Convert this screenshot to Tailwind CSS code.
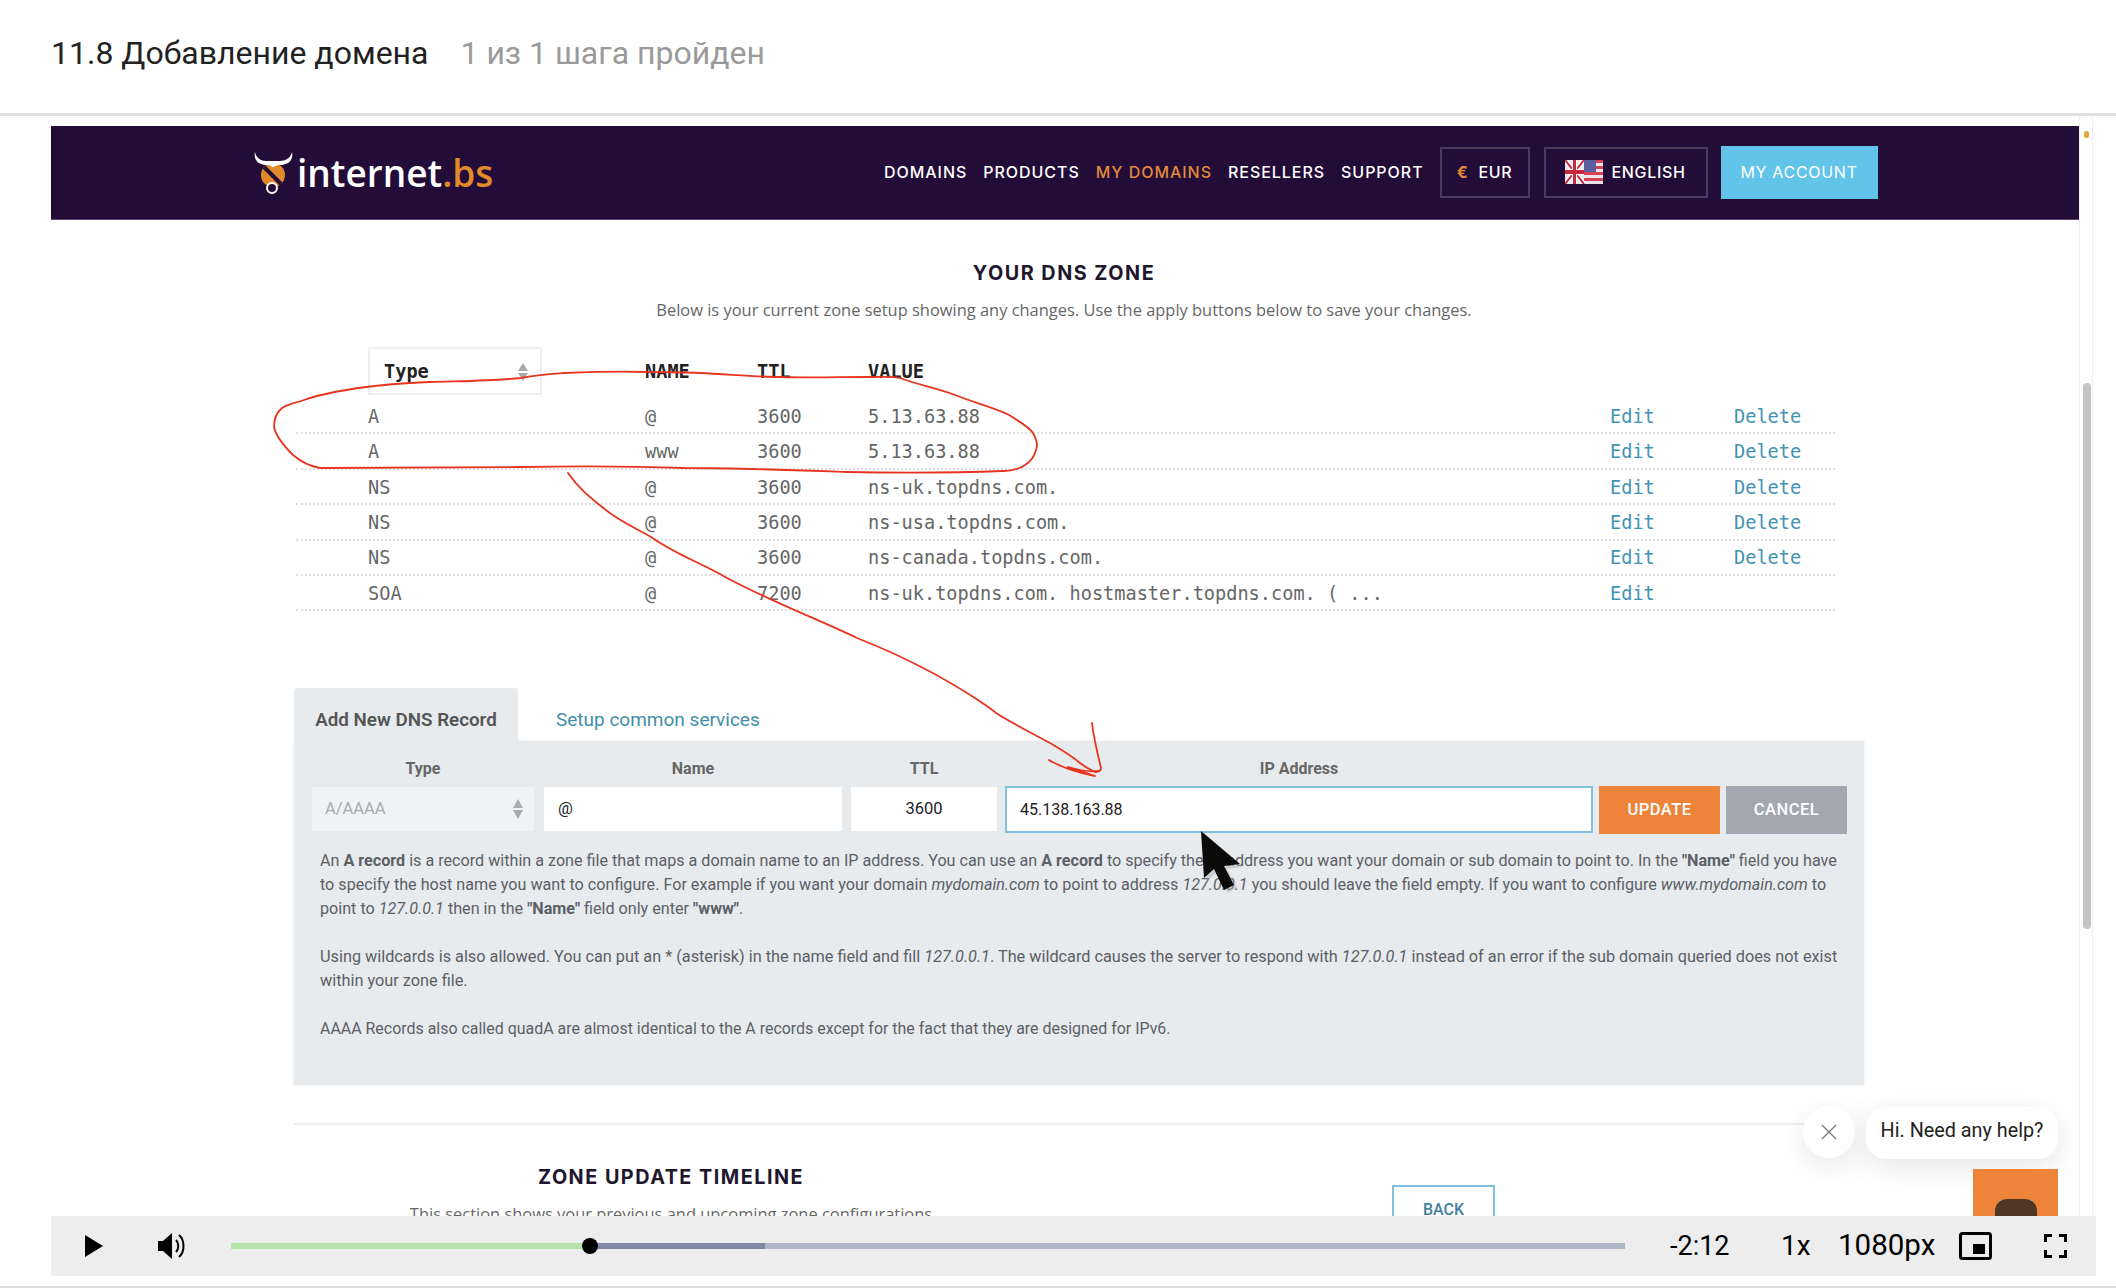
<!DOCTYPE html>
<html lang="ru">
<head>
  <meta charset="UTF-8" />
  <title>11.8 Добавление домена</title>
  <script src="https://cdn.jsdelivr.net/npm/@tailwindcss/browser@4"></script>
</head>
<body class="bg-white">
<div class="relative w-[2116px] h-[1288px] overflow-hidden bg-white font-['Roboto',sans-serif]">

  <!-- Lesson title -->
  <div class="h-[116px] border-b-[3px] border-[#e0e0e0] pl-[51px] pt-[33px] flex gap-[32px] text-[32px] leading-[40px]">
    <span class="text-[#222]">11.8 Добавление домена</span>
    <span class="text-[#9a9a9a]">1 из 1 шага пройден</span>
  </div>

  <div class="flex">
    <div class="w-[2079px] pt-[10px] pl-[51px] shrink-0">
      <!-- Site nav -->
      <div class="h-[94px] bg-[#230c37] border-b border-[#5b4a6b] flex items-center">
        <div class="ml-[202px] w-[242px] h-[46px] flex items-center">
          <svg width="44" height="44" viewBox="0 0 44 44" class="shrink-0">
            <circle cx="20" cy="24" r="12" fill="#e08a2c"/>
            <path d="M11 16 L28 33" stroke="#230c37" stroke-width="4"/>
            <path d="M2 1 C0 11 8 14 14 14 C18 14 18 16 20 16 C22 16 23 14 27 14 C33 14 41 11 39 1 C38 7 32 10 27 10 C23 10 22 10 20 10 C18 10 17 10 13 10 C8 10 3 7 2 1Z" fill="#fff"/>
            <circle cx="19" cy="37" r="5" fill="#230c37" stroke="#fff" stroke-width="2"/>
          </svg>
          <span class="font-['Open_Sans',sans-serif] font-semibold text-[37px] leading-none text-white whitespace-nowrap">internet<span class="text-[#e08a2c]">.bs</span></span>
        </div>
        <nav class="ml-[389px] pb-[2px] flex items-center gap-[16px] text-[16px] font-medium tracking-[0.96px] text-white font-['Inter',sans-serif] whitespace-nowrap">
          <span>DOMAINS</span>
          <span>PRODUCTS</span>
          <span class="text-[#e08a3c]">MY DOMAINS</span>
          <span>RESELLERS</span>
          <span>SUPPORT</span>
        </nav>
        <div class="ml-[16px] w-[90px] h-[51px] pb-[2px] border-2 border-[#4b3a5c] flex items-center justify-center gap-[10px] text-white text-[16px] font-medium tracking-[0.7px] font-['Inter',sans-serif]">
          <span class="text-[#e08a3c] font-bold">€</span><span>EUR</span>
        </div>
        <div class="ml-[14px] w-[164px] h-[51px] pb-[2px] border-2 border-[#4b3a5c] flex items-center justify-center gap-[8px] text-white text-[16px] font-medium tracking-[0.7px] font-['Inter',sans-serif]">
          <svg width="38" height="24" viewBox="0 0 38 24" class="shrink-0">
            <rect width="38" height="24" fill="#e8e4ea"/>
            <path d="M0 0 L19 24 M19 0 L0 24" stroke="#fff" stroke-width="5"/>
            <path d="M0 0 L19 24 M19 0 L0 24" stroke="#c8283c" stroke-width="2"/>
            <rect x="7" width="5" height="24" fill="#fff"/><rect y="9" width="19" height="6" fill="#fff"/>
            <rect x="8" width="3" height="24" fill="#c8283c"/><rect y="10" width="19" height="4" fill="#c8283c"/>
            <rect x="19" width="19" height="3" fill="#d8405a"/><rect x="19" y="6" width="19" height="3" fill="#d8405a"/><rect x="19" y="12" width="19" height="3" fill="#d8405a"/><rect x="19" y="18" width="19" height="3" fill="#d8405a"/>
            <rect x="19" width="12" height="12" fill="#5a5fa0"/>
          </svg>
          <span>ENGLISH</span>
        </div>
        <div class="ml-[13px] w-[157px] h-[53px] pb-[2px] bg-[#63c4ea] flex items-center justify-center text-white text-[16px] tracking-[0.7px] font-['Inter',sans-serif]">MY ACCOUNT</div>
      </div>

      <div class="pl-[243px]">
        <h2 class="w-[1540px] pt-[42px] text-center text-[19.8px] leading-[22px] font-bold tracking-[1.5px] text-[#20172e] font-['Inter',sans-serif]">YOUR DNS ZONE</h2>
        <p class="w-[1540px] mt-[14px] text-center text-[16.45px] leading-[24px] text-[#666] font-['Open_Sans',sans-serif]">Below is your current zone setup showing any changes. Use the apply buttons below to save your changes.</p>

        <!-- DNS table -->
        <div class="ml-[2px] w-[1539px] mt-[25px] font-['DejaVu_Sans_Mono',monospace] text-[18.6px] text-[#666]">
          <div class="h-[52px] grid grid-cols-[72px_277px_112px_111px_1fr] font-bold text-[#222]">
            <div class="col-start-2 w-[174px] h-[48px] pt-[2px] border-2 border-[#eceeef] flex items-center justify-between pl-[14px] pr-[11px]">
              <span>Type</span>
              <svg width="12" height="20" viewBox="0 0 12 20"><path d="M6 1 L11 9 H1Z M6 19 L11 11 H1Z" fill="#aaa"/></svg>
            </div>
            <div class="h-[48px] pt-[2px] flex items-center">NAME</div>
            <div class="h-[48px] pt-[2px] flex items-center">TTL</div>
            <div class="h-[48px] pt-[2px] flex items-center">VALUE</div>
          </div>
          <div class="h-[35.4px] pt-[2px] grid grid-cols-[72px_277px_112px_111px_742px_124px_1fr] items-center border-b-2 border-dotted border-[#ddd]"><span class="col-start-2">A</span><span>@</span><span>3600</span><span>5.13.63.88</span><span class="text-[#3f93b5]">Edit</span><span class="text-[#3f93b5]">Delete</span></div>
          <div class="h-[35.4px] pt-[2px] grid grid-cols-[72px_277px_112px_111px_742px_124px_1fr] items-center border-b-2 border-dotted border-[#ddd]"><span class="col-start-2">A</span><span>www</span><span>3600</span><span>5.13.63.88</span><span class="text-[#3f93b5]">Edit</span><span class="text-[#3f93b5]">Delete</span></div>
          <div class="h-[35.4px] pt-[2px] grid grid-cols-[72px_277px_112px_111px_742px_124px_1fr] items-center border-b-2 border-dotted border-[#ddd]"><span class="col-start-2">NS</span><span>@</span><span>3600</span><span>ns-uk.topdns.com.</span><span class="text-[#3f93b5]">Edit</span><span class="text-[#3f93b5]">Delete</span></div>
          <div class="h-[35.4px] pt-[2px] grid grid-cols-[72px_277px_112px_111px_742px_124px_1fr] items-center border-b-2 border-dotted border-[#ddd]"><span class="col-start-2">NS</span><span>@</span><span>3600</span><span>ns-usa.topdns.com.</span><span class="text-[#3f93b5]">Edit</span><span class="text-[#3f93b5]">Delete</span></div>
          <div class="h-[35.4px] pt-[2px] grid grid-cols-[72px_277px_112px_111px_742px_124px_1fr] items-center border-b-2 border-dotted border-[#ddd]"><span class="col-start-2">NS</span><span>@</span><span>3600</span><span>ns-canada.topdns.com.</span><span class="text-[#3f93b5]">Edit</span><span class="text-[#3f93b5]">Delete</span></div>
          <div class="h-[35.4px] pt-[2px] grid grid-cols-[72px_277px_112px_111px_742px_124px_1fr] items-center border-b-2 border-dotted border-[#ddd]"><span class="col-start-2">SOA</span><span>@</span><span>7200</span><span>ns-uk.topdns.com. hostmaster.topdns.com. ( ...</span><span class="text-[#3f93b5]">Edit</span></div>
        </div>

        <!-- Tabs -->
        <div class="mt-[77px] h-[53px] flex items-stretch text-[19px]">
          <div class="w-[224px] bg-[#e7ebee] rounded-t-[3px] flex items-center justify-center pt-[10px] font-semibold text-[18.8px] text-[#555]">Add New DNS Record</div>
          <div class="ml-[38px] flex items-center pt-[10px] text-[#3f8fa8]">Setup common services</div>
        </div>

        <!-- Record form -->
        <div class="w-[1570px] h-[344px] bg-[#e7ebee] shadow-[0_0_4px_rgba(0,0,0,0.08)] pl-[18px] pt-[18px]">
          <div class="grid grid-cols-[232px_307px_154px_594px] h-[20px] text-[16px] leading-[20px] font-bold text-[#666] text-center">
            <div class="w-[222px]">Type</div>
            <div class="w-[298px]">Name</div>
            <div class="w-[146px]">TTL</div>
            <div class="w-[588px]">IP Address</div>
          </div>
          <div class="mt-[7px] h-[48px] flex items-start text-[16.5px] text-[#222]">
            <div class="mt-[1px] w-[222px] h-[44px] bg-[#f0f3f5] flex items-center justify-between pl-[13px] pr-[10px] text-[#aaa]">
              <span>A/AAAA</span>
              <svg width="12" height="22" viewBox="0 0 12 22"><path d="M6 1 L11 10 H1Z M6 21 L11 12 H1Z" fill="#aaa"/></svg>
            </div>
            <div class="mt-[1px] ml-[10px] w-[298px] h-[44px] bg-white flex items-center pl-[14px]">@</div>
            <div class="mt-[1px] ml-[9px] w-[146px] h-[44px] bg-white flex items-center justify-center">3600</div>
            <div class="ml-[8px] w-[588px] h-[47px] bg-white border-2 border-[#7fc1dd] flex items-center pl-[13px] text-[16px]">45.138.163.88</div>
            <div class="ml-[6px] w-[121px] h-[48px] bg-[#ee843a] text-white flex items-center justify-center font-medium tracking-[0.5px]">UPDATE</div>
            <div class="ml-[6px] w-[121px] h-[48px] bg-[#a3a7b0] text-white flex items-center justify-center font-medium tracking-[0.5px]">CANCEL</div>
          </div>
          <div class="mt-[15px] ml-[8px] text-[16.15px] leading-[24px] text-[#5c6066] whitespace-nowrap">
            <p>An <b>A record</b> is a record within a zone file that maps a domain name to an IP address. You can use an <b>A record</b> to specify the IP address you want your domain or sub domain to point to. In the <b>"Name"</b> field you have<br>to specify the host name you want to configure. For example if you want your domain <i>mydomain.com</i> to point to address <i>127.0.0.1</i> you should leave the field empty. If you want to configure <i>www.mydomain.com</i> to<br>point to <i>127.0.0.1</i> then in the <b>"Name"</b> field only enter <b>"www"</b>.</p>
            <p class="mt-[24px] text-[16.27px]">Using wildcards is also allowed. You can put an * (asterisk) in the name field and fill <i>127.0.0.1</i>. The wildcard causes the server to respond with <i>127.0.0.1</i> instead of an error if the sub domain queried does not exist<br>within your zone file.</p>
            <p class="mt-[24px] text-[15.95px]">AAAA Records also called quadA are almost identical to the A records except for the fact that they are designed for IPv6.</p>
          </div>
        </div>

        <!-- Timeline -->
        <div class="mt-[38px] w-[1510px] border-t-2 border-[#eeeeee] flex">
          <div class="w-[754px] pt-[41px] text-center">
            <h2 class="text-[19.8px] leading-[22px] font-bold tracking-[1.5px] text-[#20172e] font-['Inter',sans-serif]">ZONE UPDATE TIMELINE</h2>
            <p class="mt-[14px] text-[16.45px] leading-[24px] text-[#666] font-['Open_Sans',sans-serif]">This section shows your previous and upcoming zone configurations</p>
          </div>
          <div class="ml-[344px] mt-[60px] w-[103px] h-[50px] border-2 border-[#7fc1dd] flex items-center justify-center text-[16px] text-[#3f7f9f] font-medium">BACK</div>
        </div>
      </div>
    </div>
    <!-- Page scrollbar -->
    <div class="relative w-[14px] h-[1100px] border-x border-[#f0f0f0]">
      <div class="absolute left-[4px] top-[15px] w-[5px] h-[7px] rounded-full bg-[#e0a93a]"></div>
      <div class="absolute left-[3px] top-[267px] w-[8px] h-[546px] rounded-full bg-[#c4c4c4]"></div>
    </div>
  </div>

  <!-- Hand-drawn annotation -->
  <svg class="absolute left-0 top-0 pointer-events-none" width="2116" height="1288" viewBox="0 0 2116 1288" fill="none" stroke="#e8341f" stroke-width="1.8" stroke-linecap="round" stroke-linejoin="round">
    <path d="M868 377 C885 377 893 376 900 378 C918 385 938 388 955 395 C975 403 996 408 1009 415 C1022 423 1030 428 1033 433 C1037 440 1038 445 1036 450 C1034 458 1030 462 1025 465 C1018 470 1010 471 1003 471 C950 473 900 473 846 472 C790 470 740 468 684 468 C630 466 575 466 521 467 C450 467 385 468 320 468 C308 466 300 461 293 455 C284 446 276 437 274 427 C274 418 277 412 282 408 C288 404 296 403 304 400 C320 394 340 391 358 388 C380 385 405 383 429 382 C460 381 495 381 521 378 C535 375 550 374 564 373 C590 372 620 371 646 372 C665 372 682 372 700 373 C727 374 754 377 781 377 C810 378 840 377 868 377"/>
    <path d="M568 473 C580 490 590 497 602 507 C620 522 636 528 651 537 C678 556 700 562 727 578 C770 601 815 618 857 638 C900 655 940 675 978 700 C985 705 990 708 996 713 C1015 725 1032 733 1050 743 C1062 750 1072 756 1080 763 C1086 768 1091 770 1095 772 C1100 772 1101 770 1101 768 C1098 755 1094 740 1092 723"/>
    <path d="M1049 760 C1062 768 1080 773 1095 776 C1085 772 1075 770 1068 767 C1078 770 1090 772 1099 771"/>
  </svg>

  <!-- Mouse cursor -->
  <svg class="absolute left-[1196px] top-[828px] blur-[0.6px]" width="52" height="66" viewBox="0 0 52 66">
    <path d="M5 3 L8 50 L18 41 L28 62 L38 57 L28 38 L44 36 Z" fill="#aaa" opacity="0.45" transform="translate(3 3)"/>
    <path d="M5 3 L8 50 L18 41 L28 62 L38 57 L28 38 L44 36 Z" fill="#0b0b0b"/>
  </svg>

  <!-- Chat widget -->
  <div class="absolute left-[1803px] top-[1106px] w-[52px] h-[52px] rounded-full bg-white shadow-[0_8px_30px_rgba(0,0,0,0.1)] flex items-center justify-center">
    <svg width="18" height="18" viewBox="0 0 18 18" stroke="#777" stroke-width="1.3"><path d="M2 2 L16 16 M16 2 L2 16"/></svg>
  </div>
  <div class="absolute left-[1866px] top-[1107px] w-[192px] h-[52px] pb-[4px] rounded-[20px] bg-white shadow-[0_8px_30px_rgba(0,0,0,0.1)] flex items-center justify-center text-[19.8px] text-[#222] whitespace-nowrap">Hi. Need any help?</div>
  <div class="absolute left-[1973px] top-[1169px] w-[85px] h-[60px] bg-[#ee843a]">
    <div class="ml-[22px] mt-[30px] w-[42px] h-[30px] rounded-[12px] bg-[#4f3526]"></div>
  </div>

  <!-- Video controls -->
  <div class="absolute left-0 bottom-0 w-[2116px] h-[72px] bg-white border-b-2 border-[#dddddd]">
    <div class="ml-[51px] w-[2045px] h-[60px] bg-[#ededed] flex items-center text-black">
      <svg class="ml-[34px]" width="18" height="22" viewBox="0 0 18 22"><path d="M0 0 L18 11 L0 22Z" fill="#000"/></svg>
      <svg class="ml-[54px]" width="30" height="28" viewBox="0 0 30 28" fill="none"><path d="M1 9 H6 L15 1 V27 L6 19 H1Z" fill="#000"/><path d="M19 8 C22 11 22 17 19 20" stroke="#000" stroke-width="2"/><path d="M22 3 C28 8 28 20 22 25" stroke="#000" stroke-width="2"/></svg>
      <div class="relative ml-[44px] w-[1394px] h-[6px] bg-[#b0b6c4]">
        <div class="absolute left-0 top-0 h-[6px] w-[534px] bg-[#8088a5]"></div>
        <div class="absolute left-0 top-0 h-[6px] w-[359px] bg-[#b5e2ab]"></div>
        <div class="absolute left-[351px] top-[-5px] w-[16px] h-[16px] rounded-full bg-black"></div>
      </div>
      <div class="ml-[45px] w-[59px] text-[27px] leading-none whitespace-nowrap">-2:12</div>
      <div class="ml-[52px] w-[30px] text-[28px] leading-none">1x</div>
      <div class="ml-[27px] w-[96px] text-[29.5px] leading-none whitespace-nowrap">1080px</div>
      <svg class="ml-[25px]" width="33" height="28" viewBox="0 0 33 28" fill="none"><rect x="1.5" y="1.5" width="30" height="25" rx="2" stroke="#000" stroke-width="3"/><rect x="14" y="12" width="12" height="10" fill="#000"/></svg>
      <svg class="ml-[52px]" width="23" height="24" viewBox="0 0 23 24" fill="none" stroke="#000" stroke-width="3"><path d="M1.5 8 V1.5 H8 M15 1.5 H21.5 V8 M1.5 16 V22.5 H8 M15 22.5 H21.5 V16"/></svg>
    </div>
  </div>
</div>
</body>
</html>
